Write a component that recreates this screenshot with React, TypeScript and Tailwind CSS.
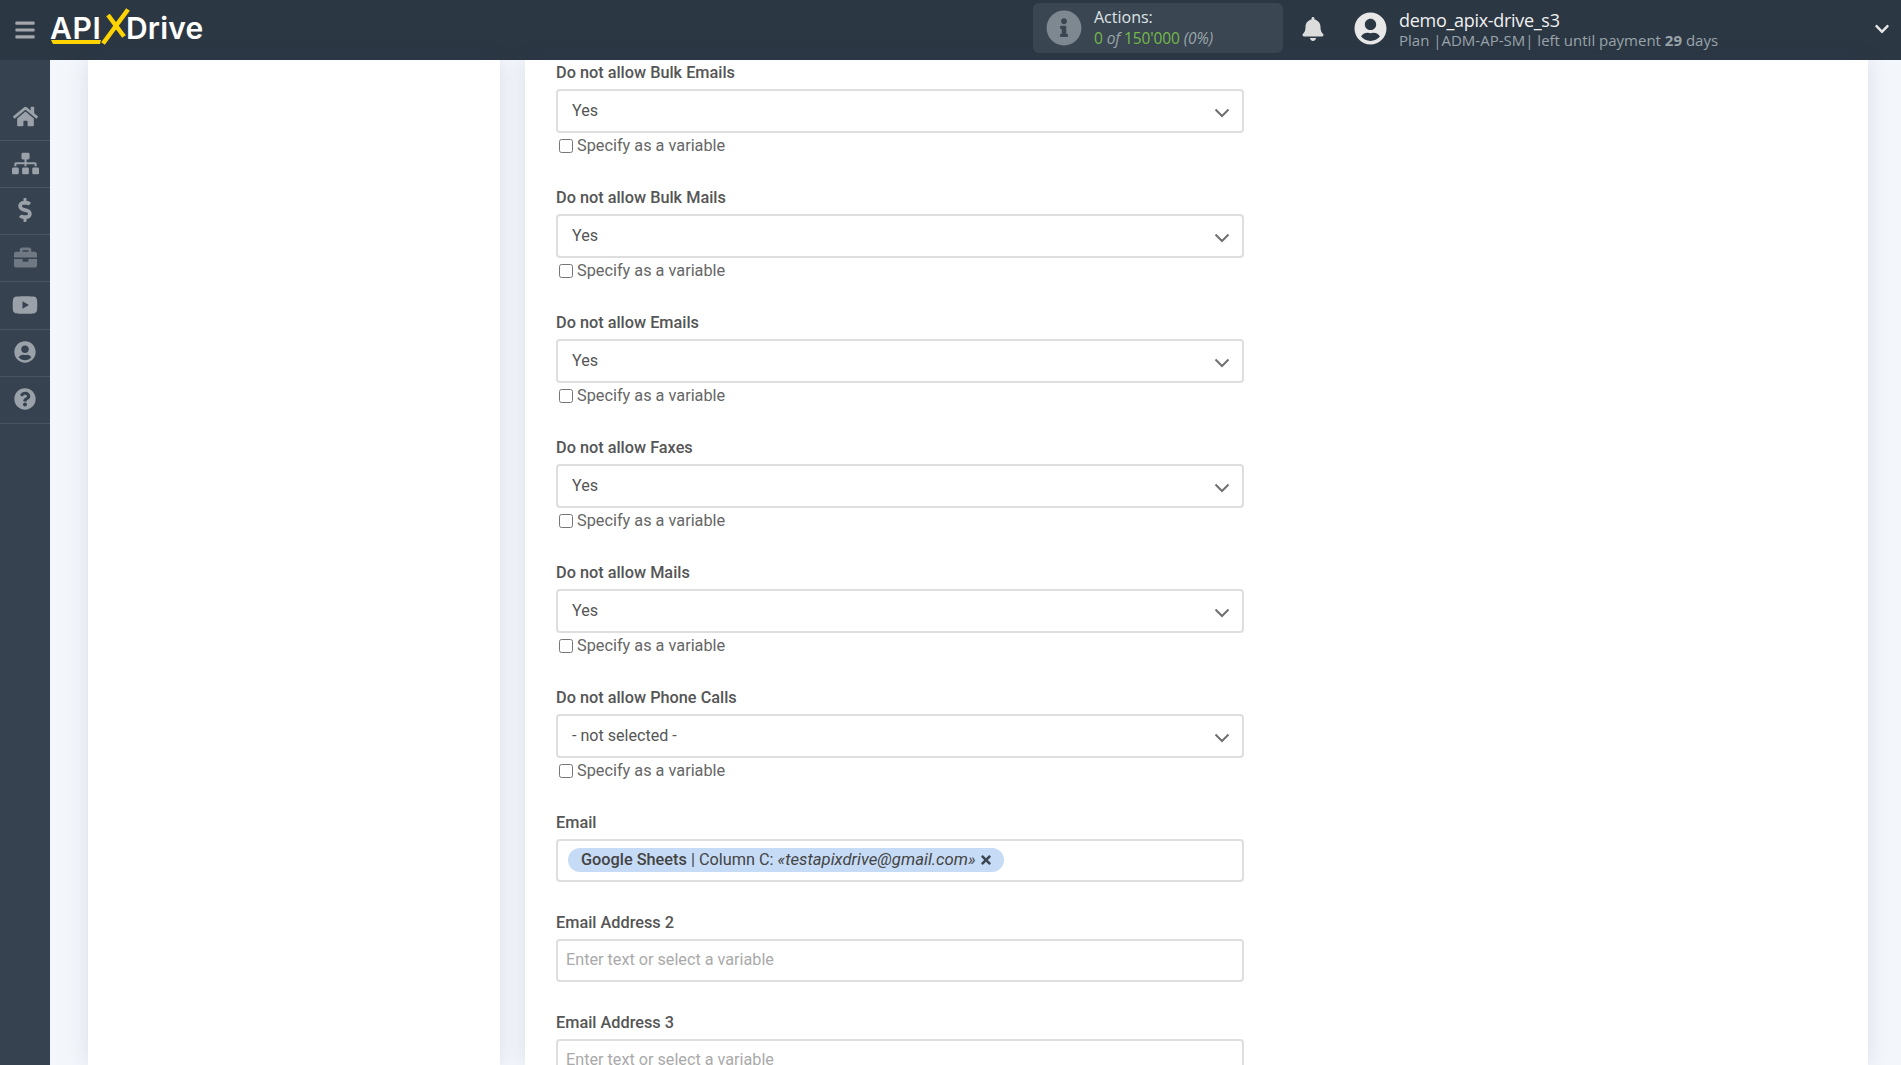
import React from "react";
import { FaBars, FaBell, FaBriefcase, FaChevronDown, FaDollarSign, FaHome, FaInfoCircle, FaQuestionCircle, FaSitemap, FaTimes, FaUserCircle, FaYoutube } from "react-icons/fa";

const nav = [
  { I: FaHome, s: 25, c: "text-[#9ba1a8]", h: "h-[47px]" },
  { I: FaSitemap, s: 27, c: "text-[#9ba1a8]", h: "h-[47px]" },
  { I: FaDollarSign, s: 24, c: "text-[#9ba1a8]", h: "h-[47px]" },
  { I: FaBriefcase, s: 23, c: "text-[#6f7883]", h: "h-[47px]" },
  { I: FaYoutube, s: 26, c: "text-[#9ba1a8]", h: "h-[48px]" },
  { I: FaUserCircle, s: 22, c: "text-[#9ba1a8]", h: "h-[47px]" },
  { I: FaQuestionCircle, s: 22, c: "text-[#9ba1a8]", h: "h-[47px]" },
];

const selects = [
  ["Do not allow Bulk Emails", "Yes"],
  ["Do not allow Bulk Mails", "Yes"],
  ["Do not allow Emails", "Yes"],
  ["Do not allow Faxes", "Yes"],
  ["Do not allow Mails", "Yes"],
  ["Do not allow Phone Calls", "- not selected -"],
];

function Label({ children }: { children: React.ReactNode }) {
  return <div className="h-[24px] leading-[26px] text-[16.3px] font-medium text-[#555]">{children}</div>;
}

function SelectField({ label, value }: { label: string; value: string }) {
  return (
    <div className="pb-[28px]">
      <Label>{label}</Label>
      <div className="mt-[5px] h-[44px] rounded-[4px] border-2 border-[#dedede] bg-white flex items-center justify-between pl-[14px] pr-[13px]">
        <span className="text-[16.1px] text-[#555]">{value}</span>
        <svg width="16" height="10" viewBox="0 0 16 10" className="mt-[3px] mr-[-1px]" fill="none">
          <path d="M1.5 1.5 8 8l6.5-6.5" stroke="#707070" strokeWidth="2" />
        </svg>
      </div>
      <label className="h-[24px] flex items-center pl-[3px] pt-[2px] text-[16.3px] text-[#666]">
        <input type="checkbox" className="w-[14px] h-[14px] m-0 mr-[4px] mb-[1px]" />
        Specify as a variable
      </label>
    </div>
  );
}

function InputField({ label }: { label: string }) {
  return (
    <div className="pb-[28px]">
      <Label>{label}</Label>
      <input
        placeholder="Enter text or select a variable"
        className="block w-full mt-[5px] h-[43px] rounded-[4px] border-2 border-[#dedede] bg-white pl-[8px] pr-[7px] pb-[2px] text-[16.2px] outline-none placeholder:text-[#aaa]"
      />
    </div>
  );
}

export default function App() {
  return (
    <div className="h-screen overflow-hidden flex flex-col font-['Roboto',sans-serif] bg-[#f3f6fb]">
      <header className="h-[60px] shrink-0 bg-[#2c3744] flex items-center font-['Open_Sans',sans-serif]">
        <FaBars size={22} className="ml-[14px] text-[#a3a7ac]" />
        <div className="relative ml-[14px] w-[160px] h-[60px] flex items-center">
          <span className="text-white font-['Inter',sans-serif] font-semibold text-[30px] leading-none tracking-[0.7px] mt-[-5px]">API</span>
          <span className="absolute left-[76px] text-white font-['Inter',sans-serif] font-semibold text-[30px] leading-none tracking-[0.2px] mt-[-5px]">Drive</span>
          <svg className="absolute left-0 top-0" width="130" height="60" viewBox="0 0 130 60" fill="none">
            <path d="M1 40H51L50 44H3Z" fill="#ffd400" />
            <path d="M53 43.5 78 9.5" stroke="#ffd400" strokeWidth="4.5" />
            <path d="M58 15 74 36.5" stroke="#ffd400" strokeWidth="4.5" />
          </svg>
        </div>
        <div className="ml-[823px] mt-[-4px] w-[250px] h-[50px] rounded-[6px] bg-[#3a4752] flex items-center pl-[13px]">
          <FaInfoCircle size={36} className="text-[#7e8890]" />
          <div className="ml-[12px] mt-[-2px]">
            <div className="text-[16px] leading-[21px] text-[#dfe3e6]">Actions:</div>
            <div className="text-[15.5px] leading-[20px] text-[#75b84a] whitespace-nowrap tracking-[-0.1px]">
              0 <i className="text-[#9aa4ab]">of</i> 150'000 <i className="text-[#9aa4ab]">(0%)</i>
            </div>
          </div>
        </div>
        <FaBell size={24} className="ml-[18px] mt-[-3px] text-[#dcdcdc]" />
        <FaUserCircle size={33} className="ml-[29px] mt-[-3px] text-[#e8e8e8]" />
        <div className="ml-[12px] whitespace-nowrap">
          <div className="text-[18px] leading-[21px] tracking-[-0.3px] text-[#f0f0f0]">demo_apix-drive_s3</div>
          <div className="text-[15px] leading-[19px] text-[#9aa4ab]">
            Plan |ADM-AP-SM| left until payment <b className="font-bold">29</b> days
          </div>
        </div>
        <FaChevronDown size={16} className="ml-auto mr-[11px] mt-[-3px] text-[#e6e6e6]" />
      </header>
      <div className="flex-1 min-h-0 flex">
        <aside className="w-[50px] shrink-0 bg-[#364250] pt-[34px]">
          {nav.map(({ I, s, c, h }, i) => (
            <div key={i} className={`${h} pb-[2px] border-b border-[#4a5563] flex items-center justify-center`}>
              <I size={s} className={c} />
            </div>
          ))}
        </aside>
        <main className="flex-1 min-w-0 flex gap-[25px] pl-[38px] pr-[33px]">
          <div className="w-[412px] shrink-0 bg-white shadow-[0_0_20px_rgba(50,60,80,0.12)]" />
          <div className="flex-1 min-w-0 bg-white shadow-[0_0_20px_rgba(50,60,80,0.12)] pl-[31px]">
            <div className="w-[688px]">
              {selects.map(([l, v]) => (
                <SelectField key={l} label={l} value={v} />
              ))}
              <div className="pb-[28px]">
                <Label>Email</Label>
                <div className="mt-[5px] h-[43px] rounded-[4px] border-2 border-[#dedede] bg-white flex items-center pl-[10px]">
                  <div className="h-[24px] mb-[1px] rounded-full bg-[#c6dbf5] pl-[13px] pr-[11px] flex items-center text-[16.3px] text-[#444] whitespace-nowrap">
                    <span className="font-medium">Google Sheets</span>
                    <span className="ml-[4px]">| Column C: </span>
                    <i className="ml-[4px] text-[16.7px] text-[#444]">«testapixdrive@gmail.com»</i>
                    <FaTimes size={14} className="ml-[3px] text-[#3c4650]" />
                  </div>
                </div>
              </div>
              <InputField label="Email Address 2" />
              <InputField label="Email Address 3" />
            </div>
          </div>
        </main>
      </div>
    </div>
  );
}
